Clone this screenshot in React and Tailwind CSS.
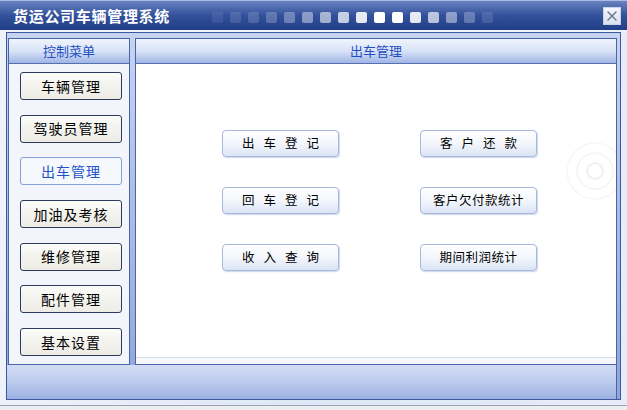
import { X } from "lucide-react";

const font = { fontFamily: '"Noto Sans CJK SC", "Noto Sans", sans-serif' };

const dots = [
    "bg-white/[0.08]",
    "bg-white/[0.12]",
    "bg-white/[0.16]",
    "bg-white/[0.22]",
    "bg-white/[0.3]",
    "bg-white/[0.42]",
    "bg-white/[0.56]",
    "bg-white/[0.72]",
    "bg-white/[0.88]",
    "bg-white",
    "bg-white",
    "bg-white/[0.88]",
    "bg-white/[0.66]",
    "bg-white/[0.44]",
    "bg-white/[0.26]",
    "bg-white/[0.12]",
];

const menu = ["车辆管理", "驾驶员管理", "出车管理", "加油及考核", "维修管理", "配件管理", "基本设置"];

const actions = [
    ["出车登记", "客户还款"],
    ["回车登记", "客户欠付款统计"],
    ["收入查询", "期间利润统计"],
];

const PanelHeader = ({ children }) => (
    <div className="flex h-[25px] shrink-0 items-center justify-center border-b border-[#5670b2] bg-gradient-to-b from-[#f0f4fc] via-[#d9e3f7] to-[#9fb5e4] text-[13px] text-[#1f4fc0]">
        {children}
    </div>
);

const ActionButton = ({ label }) => {
    const spaced = label.length === 4;
    return (
        <button
            className={`flex h-[27px] w-[117px] items-center justify-center rounded-[4px] border border-[#a7b9de] bg-gradient-to-b from-white via-[#f3f6fc] to-[#dbe4f6] text-[12.5px] text-black shadow-[1px_1px_1px_rgba(120,140,190,0.35)] ${spaced ? "tracking-[9px] pl-[9px]" : "tracking-[0.5px]"}`}
        >
            {label}
        </button>
    );
};

export default function App() {
    return (
        <div style={font} className="flex h-[410px] w-[627px] flex-col overflow-hidden bg-gradient-to-r from-[#eef2fa] via-[#dfe7f6] to-[#e7edf8]">
            {/* title bar */}
            <div className="flex h-[30px] shrink-0 items-center border-t border-[#a9bbe2] bg-gradient-to-b from-[#6982c0] via-[#33519b] to-[#213f89] pl-[13px] pr-[6px]">
                <span className="mt-[2px] w-[199px] text-[15px] font-bold tracking-[0.7px] text-white">货运公司车辆管理系统</span>
                <div className="mt-[3px] flex gap-[7px]">
                    {dots.map((cls, i) => (
                        <span key={i} className={`h-[11px] w-[11px] rounded-[2px] ${cls}`} />
                    ))}
                </div>
                <div className="flex-1" />
                <div className="flex h-[18px] w-[18px] items-center justify-center border border-[#c9d3e8] bg-gradient-to-b from-[#f4f6fb] to-[#d9e0ee]">
                    <X size={16} strokeWidth={2} className="text-[#6b7894]" />
                </div>
            </div>
            <div className="h-[2px] shrink-0 bg-[#eef2fa]" />

            {/* main frame */}
            <div className="mx-[6px] flex h-[368px] shrink-0 flex-col border border-[#3d58a0] bg-gradient-to-b from-[#c7d4f0] to-[#8fa5da]">
                <div className="flex pl-[1px] pr-[3px] pt-[5px]">
                    {/* left menu */}
                    <div className="flex h-[327px] w-[122px] flex-col border border-[#4a64a8] bg-[#f2f5fb]">
                        <PanelHeader>控制菜单</PanelHeader>
                        <div className="flex flex-col gap-[14.7px] pl-[11px] pt-[8px]">
                            {menu.map((m) => {
                                const active = m === "出车管理";
                                return (
                                    <button
                                        key={m}
                                        className={`flex h-[28px] w-[102px] items-center justify-center rounded-[3px] border text-[14px] tracking-[1px] ${active ? "border-[#86a1da] bg-[#f5f8fd] text-[#1f52cc]" : "border-[#2c3b5c] bg-gradient-to-b from-[#fbfbf8] to-[#ecebe4] text-black"}`}
                                    >
                                        {m}
                                    </button>
                                );
                            })}
                        </div>
                    </div>

                    <div className="w-[5px]" />

                    {/* right panel */}
                    <div className="flex h-[327px] flex-1 flex-col border border-[#4a64a8] bg-white">
                        <PanelHeader>出车管理</PanelHeader>
                        <div className="relative flex flex-1 flex-col overflow-hidden">
                            <div className="flex flex-1 flex-col gap-[30px] pl-[86px] pt-[66px]">
                                {actions.map(([a, b]) => (
                                    <div key={a} className="flex gap-[81px]">
                                        <ActionButton label={a} />
                                        <ActionButton label={b} />
                                    </div>
                                ))}
                            </div>
                            <div className="h-[7px] border-t border-[#d6deec] bg-[#f6f8fc]" />
                            <svg className="absolute left-[427px] top-[75px]" width="64" height="64" viewBox="0 0 64 64" fill="none">
                                <circle cx="32" cy="32" r="28" stroke="#f6f7fa" strokeWidth="1.5" />
                                <circle cx="32" cy="32" r="18" stroke="#f2f4f7" strokeWidth="1.5" />
                                <circle cx="32" cy="32" r="8" stroke="#eef0f4" strokeWidth="2" />
                            </svg>
                        </div>
                    </div>
                </div>

                {/* bottom bar */}
                <div className="mr-[3px] flex-1 border-r border-[#4a64a8] bg-gradient-to-b from-[#d3ddf4] via-[#bccbee] to-[#9cb1e2]" />
            </div>

            <div className="mt-[5px] flex-1 border-t border-[#9aa3b4] bg-[#eceef2]" />
        </div>
    );
}
